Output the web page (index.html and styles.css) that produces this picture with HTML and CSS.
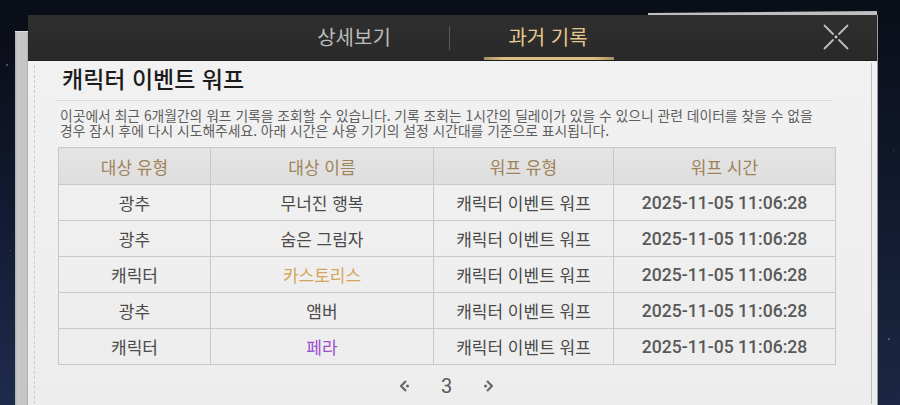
FILE: index.html
```html
<!DOCTYPE html>
<html lang="ko">
<head>
<meta charset="utf-8">
<link rel="stylesheet" href="styles.css">
</head>
<body>
<div class="stage">
  <div class="star s1"></div><div class="star s2"></div><div class="star s3"></div><div class="star s4"></div>
  <div class="sheet-left"></div>
  <div class="sheet-top"></div>
  <div class="panel">
    <div class="header">
      <div class="tab">상세보기</div>
      <div class="divider"></div>
      <div class="tab active">과거 기록</div>
      <div class="close">
        <svg width="26" height="26" viewBox="0 0 26 26">
          <g stroke="#bdbdbd" stroke-width="1.8" stroke-linecap="round">
            <line x1="1.5" y1="1.5" x2="10" y2="10"/>
            <line x1="24.5" y1="1.5" x2="16" y2="10"/>
            <line x1="1.5" y1="24.5" x2="10" y2="16"/>
            <line x1="24.5" y1="24.5" x2="16" y2="16"/>
          </g>
          <circle cx="13" cy="13" r="1.4" fill="#d0d0d0"/>
        </svg>
      </div>
    </div>
    <div class="body">
      <div class="title-row"><h1 class="title">캐릭터 이벤트 워프</h1></div>
      <p class="desc">이곳에서 최근 6개월간의 워프 기록을 조회할 수 있습니다. 기록 조회는 1시간의 딜레이가 있을 수 있으니 관련 데이터를 찾을 수 없을 경우 잠시 후에 다시 시도해주세요. 아래 시간은 사용 기기의 설정 시간대를 기준으로 표시됩니다.</p>
      <table class="records">
        <colgroup><col class="c1"><col class="c2"><col class="c3"><col class="c4"></colgroup>
        <thead>
          <tr><th>대상 유형</th><th>대상 이름</th><th>워프 유형</th><th>워프 시간</th></tr>
        </thead>
        <tbody>
          <tr><td>광추</td><td>무너진 행복</td><td>캐릭터 이벤트 워프</td><td class="time">2025-11-05 11:06:28</td></tr>
          <tr><td>광추</td><td>숨은 그림자</td><td>캐릭터 이벤트 워프</td><td class="time">2025-11-05 11:06:28</td></tr>
          <tr><td>캐릭터</td><td class="gold">카스토리스</td><td>캐릭터 이벤트 워프</td><td class="time">2025-11-05 11:06:28</td></tr>
          <tr><td>광추</td><td>앰버</td><td>캐릭터 이벤트 워프</td><td class="time">2025-11-05 11:06:28</td></tr>
          <tr><td>캐릭터</td><td class="purple">페라</td><td>캐릭터 이벤트 워프</td><td class="time">2025-11-05 11:06:28</td></tr>
        </tbody>
      </table>
      <div class="pager">
        <svg class="arrow" width="12" height="14" viewBox="0 0 12 14">
          <path d="M7 2 L2 7 L7 12" fill="none" stroke="#666" stroke-width="2.2" stroke-linejoin="round"/>
          <circle cx="8.5" cy="7" r="1.5" fill="#666"/>
        </svg>
        <span class="page">3</span>
        <svg class="arrow" width="12" height="14" viewBox="0 0 12 14">
          <path d="M5 2 L10 7 L5 12" fill="none" stroke="#666" stroke-width="2.2" stroke-linejoin="round"/>
          <circle cx="3.5" cy="7" r="1.5" fill="#666"/>
        </svg>
      </div>
    </div>
  </div>
</div>
</body>
</html>
```
FILE: styles.css
```css
* { box-sizing: border-box; }
html, body { margin: 0; padding: 0; }
body {
  width: 900px; height: 405px; overflow: hidden;
  background: radial-gradient(ellipse at 0% 100%, #1e2c4c 0%, #111a30 35%, transparent 65%),
              radial-gradient(ellipse at 100% 100%, #1b2743 0%, #10182b 40%, transparent 70%),
              #0a0e18;
  font-family: "Noto Sans CJK KR", "Noto Sans", sans-serif;
}
.stage { position: relative; width: 900px; height: 405px; overflow: hidden; }
.star { position: absolute; width: 2px; height: 2px; border-radius: 50%; background: #7f8aa6; opacity: .7; }
.s1 { left: 6px; top: 64px; }
.s2 { left: 888px; top: 338px; }
.s3 { left: 893px; top: 150px; width: 1px; height: 1px; }
.s4 { left: 10px; top: 250px; width: 1px; height: 1px; }
.sheet-left {
  position: absolute; left: 15px; top: 31px; width: 20px; height: 380px;
  background: linear-gradient(90deg, #a9a9a9 0, #c9c9c9 2px, #c4c4c4 12px, #9e9e9e 13px);
  border-top: 1px solid #e0e0e0;
}
.sheet-top {
  position: absolute; left: 648px; top: 11px; width: 229px; height: 8px;
  background: #bfbfbf;
  transform: rotate(-0.5deg);
  transform-origin: right top;
}
.panel {
  position: relative;
  margin: 15px 0 0 28px;
  width: 850px;
  height: 390px;
  overflow: hidden;
  background: linear-gradient(180deg, #f6f6f6 0, #f1f1f1 60px, #ededed 100%);
  border-right: 1px solid #9a9a9a;
}
.header {
  height: 46px;
  display: flex; align-items: center;
  padding-left: 231px; padding-right: 28px;
  background: linear-gradient(180deg, #2f2f2f 0, #292929 100%);
  border-bottom: 1px solid #1e1e1e;
}
.tab {
  width: 190px; height: 46px;
  display: flex; align-items: center; justify-content: center;
  font-size: 20px; font-weight: 400; color: #bcbcbc;
  position: relative;
  padding-bottom: 2px;
}
.tab.active { width: 196px; color: #e4c78c; }
.tab.active::after {
  content: ""; position: absolute; left: 34px; right: 32px; bottom: 1px; height: 3px;
  background: linear-gradient(90deg, rgba(217,184,120,.7), #dcbd80 15%, #dcbd80 85%, rgba(217,184,120,.7));
}
.divider { width: 1px; height: 24px; background: #5a5a5a; }
.close { margin-left: auto; width: 26px; height: 26px; margin-top: -2px; }
.close svg { display: block; }
.body {
  position: relative;
  padding: 0 42px 0 30px;
  height: 343px;
}
.body::before {
  content: ""; position: absolute; left: 6px; top: 4px; bottom: 0; width: 0;
  border-left: 1px dashed #cdcdcd;
}
.body::after {
  content: ""; position: absolute; right: 5px; top: 2px; bottom: 0; width: 1px;
  background: #bdbdbd;
}
.title-row {
  margin: 0 2px 0 -3px;
  padding: 2px 0 7px 7px;
  border-bottom: 1px solid #d9d9d9;
}
.title {
  margin: 0; font-size: 23px; font-weight: 500; color: #1c1c1c;
  line-height: 30px;
}
.desc {
  margin: 7px 0 0 2px;
  font-size: 13.8px; line-height: 14.5px; color: #5e5e5e;
  word-break: keep-all;
}
.records {
  margin-top: 10px;
  width: 777px;
  border-collapse: collapse;
  table-layout: fixed;
}
.c1 { width: 152px; } .c2 { width: 223px; } .c3 { width: 180px; } .c4 { width: 222px; }
.records th, .records td {
  border: 1px solid #c8c8c8;
  text-align: center;
  padding: 0;
}
.records th {
  height: 37px;
  background: linear-gradient(180deg, #e4e4e4, #dedede);
  color: #9f8259; font-size: 17px; font-weight: 400;
}
.records td {
  height: 36px;
  color: #4a4a4a; font-size: 17px; font-weight: 400;
}
.records td.time { font-family: Roboto, "Noto Sans", sans-serif; font-size: 17.6px; font-weight: 500; color: #595959; }
.records td.gold { color: #d4a65a; }
.records td.purple { color: #9b4fcf; }
.pager {
  width: 777px;
  display: flex; align-items: center; justify-content: center;
  gap: 30px;
  margin-top: 9px;
}
.arrow { display: block; }
.page { font-family: Roboto, sans-serif; font-size: 20px; color: #5a5a5a; font-weight: 400; }
```
